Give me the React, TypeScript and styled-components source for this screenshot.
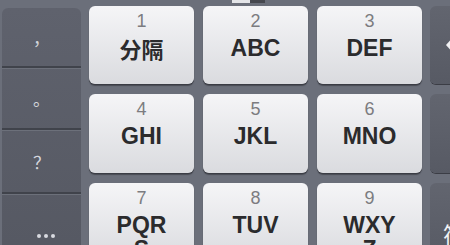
import React from "react";
import styled, { createGlobalStyle } from "styled-components";

const GlobalStyle = createGlobalStyle`
  html, body {
    margin: 0;
    padding: 0;
    width: 450px;
    height: 245px;
    overflow: hidden;
    background-color: #6b6f7a;
  }
  * {
    box-sizing: border-box;
  }
`;

const Screen = styled.div`
  width: 450px;
  height: 245px;
  overflow: hidden;
  font-family: "Liberation Sans", "Noto Sans CJK SC", sans-serif;
`;

const TopStrip = styled.div`
  display: flex;
  height: 3px;
  padding-left: 232px;
`;

const Indicator = styled.div<{ $tone: string; $w: number }>`
  width: ${(p) => p.$w}px;
  height: 3px;
  background-color: ${(p) => p.$tone};
`;

const Body = styled.div`
  display: flex;
  padding: 3px 0 0 2px;
  gap: 8px;
`;

const SidePanel = styled.div`
  width: 79px;
  flex-shrink: 0;
  margin-top: 2px;
  height: 260px;
  background: linear-gradient(#5f626d, #555862);
  border-radius: 6px 6px 0 0;
  display: flex;
  flex-direction: column;
`;

const SideCell = styled.div<{ $h: number }>`
  height: ${(p) => p.$h}px;
  flex-shrink: 0;
  display: flex;
  align-items: center;
  justify-content: center;
  color: #d4d6dc;
  font-size: 17px;
  font-family: "Noto Sans CJK SC", sans-serif;
  border-bottom: 2px solid #40434b;
  box-shadow: 0 1px 0 #6c707a;
  &:last-child {
    align-items: flex-start;
    padding-top: 40px;
    border-bottom: none;
    box-shadow: none;
  }
`;

const Dots = styled.div`
  display: flex;
  gap: 3px;
  margin-left: 8px;
`;

const Dot = styled.span`
  width: 4px;
  height: 4px;
  border-radius: 50%;
  background-color: #d8dae0;
`;

const KeyGrid = styled.div`
  flex-shrink: 0;
  display: grid;
  grid-template-columns: 105px 105px 105px 60px;
  grid-template-rows: 78px 79px 78px;
  column-gap: 9px;
  row-gap: 10px;
`;

const Key = styled.div`
  border-radius: 6px;
  background: linear-gradient(#f5f5f7, #dadbdf);
  box-shadow: 0 1px 0 #3b3d45, 0 2px 1px rgba(40, 42, 48, 0.5);
  display: flex;
  flex-direction: column;
  align-items: center;
  padding-top: 5px;
  overflow: hidden;
`;

const Num = styled.div`
  font-size: 18px;
  line-height: 20px;
  color: #7c7c80;
`;

const Letters = styled.div<{ $cjk?: boolean }>`
  font-size: ${(p) => (p.$cjk ? "22px" : "23px")};
  font-weight: 700;
  line-height: 24px;
  margin-top: 5px;
  color: #2b2b2d;
  text-align: center;
  font-family: ${(p) =>
    p.$cjk ? '"Noto Sans CJK SC", sans-serif' : '"Liberation Sans", sans-serif'};
`;

const FnKey = styled.div`
  margin-left: -1px;
  border-radius: 6px;
  background: linear-gradient(#62656f, #575a64);
  box-shadow: 0 1px 0 #3b3d45;
  display: flex;
  align-items: center;
  padding-left: 15px;
  color: #f2f2f4;
  overflow: hidden;
`;

const FnLabel = styled.span`
  font-family: "Noto Sans CJK SC", sans-serif;
  font-size: 22px;
  margin-top: 22px;
  margin-left: -2px;
`;

const keys: { num: string; lines: string[]; cjk?: boolean }[] = [
  { num: "1", lines: ["分隔"], cjk: true },
  { num: "2", lines: ["ABC"] },
  { num: "3", lines: ["DEF"] },
  { num: "4", lines: ["GHI"] },
  { num: "5", lines: ["JKL"] },
  { num: "6", lines: ["MNO"] },
  { num: "7", lines: ["PQR", "S"] },
  { num: "8", lines: ["TUV"] },
  { num: "9", lines: ["WXY", "Z"] },
];

const fnKeys = [
  <svg key="del" width="30" height="22" viewBox="0 0 30 22">
    <path d="M1 11 L9 2 H29 V20 H9 Z" fill="#f2f2f4" />
  </svg>,
  null,
  <FnLabel key="sym">符</FnLabel>,
];

const App: React.FC = () => {
  return (
    <Screen>
      <GlobalStyle />
      <TopStrip>
        <Indicator $tone="#e4e5e8" $w={18} />
        <Indicator $tone="#46484f" $w={15} />
      </TopStrip>
      <Body>
        <SidePanel>
          <SideCell $h={60}>，</SideCell>
          <SideCell $h={62}>。</SideCell>
          <SideCell $h={64}>？</SideCell>
          <SideCell $h={60}>
            <Dots>
              <Dot />
              <Dot />
              <Dot />
            </Dots>
          </SideCell>
        </SidePanel>
        <KeyGrid>
          {[0, 1, 2].map((row) => (
            <React.Fragment key={row}>
              {keys.slice(row * 3, row * 3 + 3).map((k) => (
                <Key key={k.num}>
                  <Num>{k.num}</Num>
                  <Letters $cjk={k.cjk}>
                    {k.lines.map((l) => (
                      <div key={l}>{l}</div>
                    ))}
                  </Letters>
                </Key>
              ))}
              <FnKey>{fnKeys[row]}</FnKey>
            </React.Fragment>
          ))}
        </KeyGrid>
      </Body>
    </Screen>
  );
};

export default App;
